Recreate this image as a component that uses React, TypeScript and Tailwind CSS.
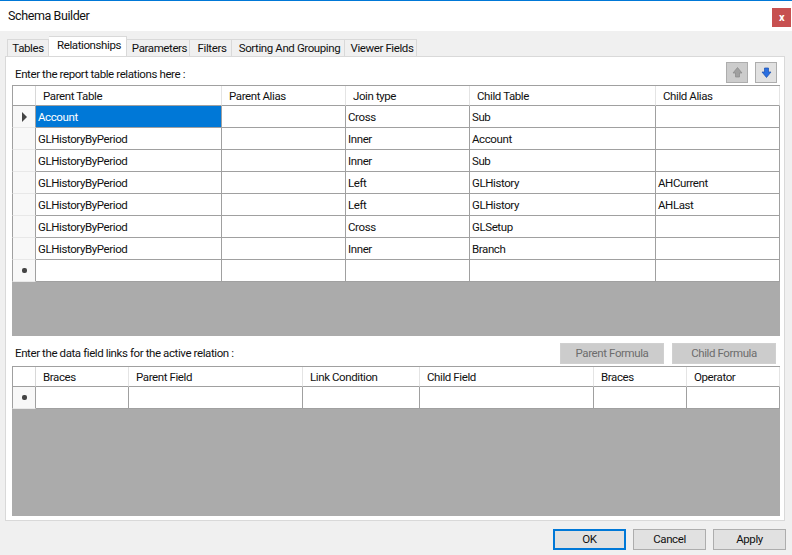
const F = "font-['Roboto','Liberation_Sans',sans-serif]";

function Arrow({ up, color, edge }: { up?: boolean; color: string; edge: string }) {
  return (
    <svg width="13" height="13" viewBox="0 0 13 13" className={up ? "" : "rotate-180"}>
      <path d="M6.5 1.5 L11 7 H8.5 V11 H4.5 V7 H2 Z" fill={color} stroke={edge} strokeWidth="0.7" />
    </svg>
  );
}

function GridTable({
  cols,
  headers,
  rows,
  grayClass,
}: {
  cols: string;
  headers: string[];
  rows: { text: string[]; marker?: "current" | "new" }[];
  grayClass: string;
}) {
  return (
    <div className="ml-[6px] flex w-[768px] flex-col border-t border-[#a0a0a0] bg-[#ababab]">
      <div className={`grid ${cols} h-[20px] bg-white`}>
        <div className="border-l border-[#a0a0a0] border-r border-r-[#d8d8d8] border-b border-b-[#a0a0a0]" />
        {headers.map((h) => (
          <div key={h} className="border-r border-[#e4e4e4] border-b border-b-[#a0a0a0] pl-[7px] text-[11.5px] text-[#111]">
            <div className="h-[19px] leading-[20px] whitespace-nowrap">{h}</div>
          </div>
        ))}
      </div>
      {rows.map((r, ri) => (
        <div key={ri} className={`grid ${cols} h-[22px] bg-white`}>
          <div className="flex items-center justify-center border-l border-[#a0a0a0] border-r border-r-[#a0a0a0] border-b border-b-[#e8e8e8] bg-[#f8f8f8]">
            {r.marker === "current" && (
              <svg width="7" height="10" viewBox="0 0 7 10">
                <path d="M1 0 L6 5 L1 10 Z" fill="#444" />
              </svg>
            )}
            {r.marker === "new" && <span className="block h-[5px] w-[5px] rounded-[2px] bg-[#444]" />}
          </div>
          {r.text.map((t, ci) => {
            const selected = ri === 0 && ci === 0 && r.marker === "current";
            return (
              <div
                key={ci}
                className={`border-r border-[#a0a0a0] border-b border-b-[#a0a0a0] pl-[2px] text-[11.5px] ${
                  selected ? "bg-[#0078d7] text-white" : "text-[#111]"
                }`}
              >
                <div className="h-[21px] leading-[23px] whitespace-nowrap">{t}</div>
              </div>
            );
          })}
        </div>
      ))}
      <div className={grayClass} />
    </div>
  );
}

export default function App() {
  const tabs = ["Tables", "Relationships", "Parameters", "Filters", "Sorting And Grouping", "Viewer Fields"];
  const tabW = ["w-[42px]", "w-[78px]", "w-[63px]", "w-[42px]", "w-[113px]", "w-[72px]"];
  const data = [
    ["Account", "", "Cross", "Sub", ""],
    ["GLHistoryByPeriod", "", "Inner", "Account", ""],
    ["GLHistoryByPeriod", "", "Inner", "Sub", ""],
    ["GLHistoryByPeriod", "", "Left", "GLHistory", "AHCurrent"],
    ["GLHistoryByPeriod", "", "Left", "GLHistory", "AHLast"],
    ["GLHistoryByPeriod", "", "Cross", "GLSetup", ""],
    ["GLHistoryByPeriod", "", "Inner", "Branch", ""],
    ["", "", "", "", ""],
  ];
  return (
    <div className={`${F} flex h-[555px] w-[792px] flex-col overflow-hidden bg-[#f0f0f0] text-[11.5px] tracking-[-0.4px] text-[#111]`}>
      <div className="flex h-[31px] items-start justify-between border-t border-[#0078d7] bg-white">
        <span className="ml-[8px] mt-[7px] text-[12.5px] leading-[16px] text-[#111]">Schema Builder</span>
        <div className="mr-[1px] mt-[7px] flex h-[19px] w-[19px] items-center justify-center bg-[#c75050] text-[11px] font-bold leading-none text-white">
          x
        </div>
      </div>

      <div className="ml-[7px] mt-[5px] flex h-[20px] items-end">
        {tabs.map((t, i) => (
          <div
            key={t}
            className={`${tabW[i]} shrink-0 whitespace-nowrap border-t border-r border-[#d9d9d9] text-center ${
              i === 0 ? "border-l " : "pl-[3px] "
            }${i === 1 ? "h-[20px] bg-white leading-[17px]" : "h-[17px] bg-[#f0f0f0] leading-[17px]"}`}
          >
            {t}
          </div>
        ))}
      </div>

      <div className="ml-[5px] flex h-[465px] w-[780px] flex-col border border-[#d9d9d9] bg-white">
        <div className="flex h-[28px] items-start justify-between">
          <span className="ml-[9px] mt-[9px] leading-[16px]">Enter the report table relations here :</span>
          <div className="mr-[7px] mt-[5px] flex gap-[7px]">
            <div className="flex h-[21px] w-[22px] items-center justify-center border border-[#adadad] bg-[#cccccc]">
              <Arrow up color="#a0a0a0" edge="#8a8a8a" />
            </div>
            <div className="flex h-[21px] w-[22px] items-center justify-center border border-[#adadad] bg-[#e1e1e1]">
              <Arrow color="#2a6fe0" edge="#1a4fb0" />
            </div>
          </div>
        </div>

        <GridTable
          cols="grid-cols-[24px_186px_124px_124px_186px_124px]"
          headers={["Parent Table", "Parent Alias", "Join type", "Child Table", "Child Alias"]}
          rows={data.map((text, i) => ({ text, marker: i === 0 ? "current" : i === 7 ? "new" : undefined }))}
          grayClass="h-[54px]"
        />

        <div className="flex h-[30px] items-start justify-between">
          <span className="ml-[9px] mt-[9px] leading-[16px]">Enter the data field links for the active relation :</span>
          <div className="mr-[8px] mt-[7px] flex gap-[8px]">
            <div className="flex h-[21px] w-[104px] items-center justify-center border border-[#d0d0d0] bg-[#cccccc] text-[#6d6d6d]">Parent Formula</div>
            <div className="flex h-[21px] w-[104px] items-center justify-center border border-[#d0d0d0] bg-[#cccccc] text-[#6d6d6d]">Child Formula</div>
          </div>
        </div>

        <GridTable
          cols="grid-cols-[24px_93px_174px_117px_174px_93px_93px]"
          headers={["Braces", "Parent Field", "Link Condition", "Child Field", "Braces", "Operator"]}
          rows={[{ text: ["", "", "", "", "", ""], marker: "new" }]}
          grayClass="h-[107px]"
        />
      </div>

      <div className="mr-[6px] mt-[8px] flex justify-end gap-[7px]">
        <div className="flex h-[21px] w-[73px] items-center justify-center border-2 border-[#0078d7] bg-[#e1e1e1]">OK</div>
        <div className="flex h-[21px] w-[73px] items-center justify-center border border-[#adadad] bg-[#e1e1e1]">Cancel</div>
        <div className="flex h-[21px] w-[73px] items-center justify-center border border-[#adadad] bg-[#e1e1e1]">Apply</div>
      </div>
    </div>
  );
}
